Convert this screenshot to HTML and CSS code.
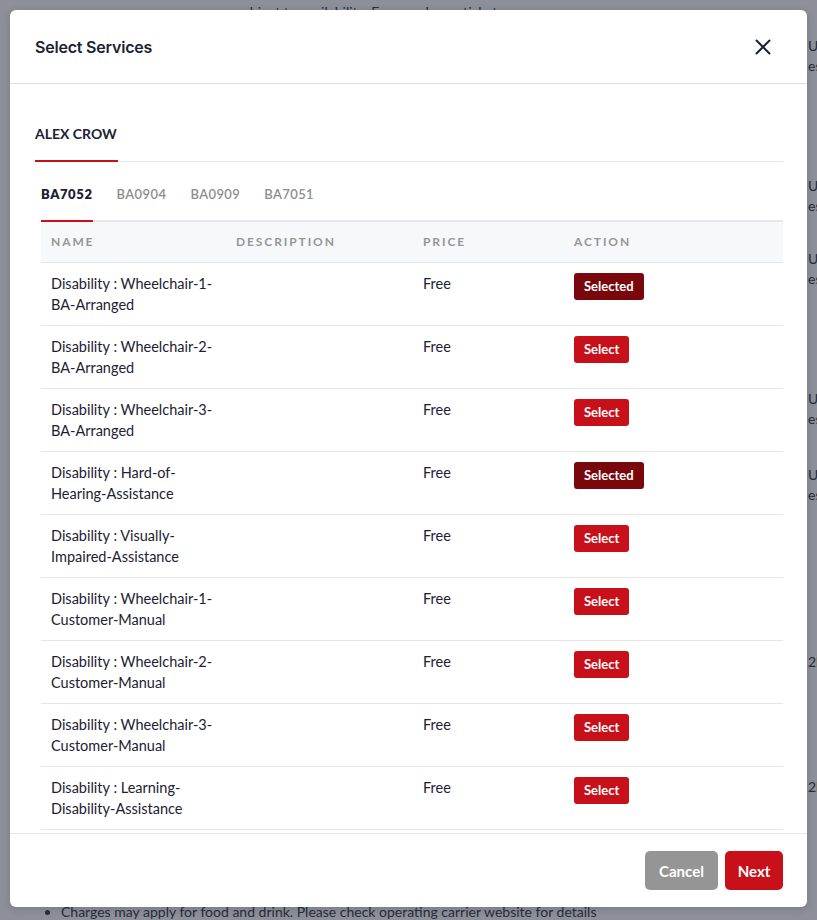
FILE: index.html
```html
<!DOCTYPE html>
<html lang="en">
<head>
<meta charset="utf-8">
<title>Select Services</title>
<link rel="stylesheet" href="styles.css">
</head>
<body>
<div class="page">
  <p class="bg-top">subject to availability. Fees apply per ticket</p>
  <div class="bg-right">
    <div class="bg-item i1"><span>UK</span><span>est</span></div>
    <div class="bg-item i2"><span>UK</span><span>est</span></div>
    <div class="bg-item i3"><span>UK</span><span>est</span></div>
    <div class="bg-item i4"><span>UK</span><span>est</span></div>
    <div class="bg-item i5"><span>UK</span><span>est</span></div>
    <div class="bg-item i6"><span>2h</span></div>
    <div class="bg-item i7"><span>2h</span></div>
  </div>
  <ul class="bg-bottom"><li>Charges may apply for food and drink. Please check operating carrier website for details</li></ul>
</div>
<div class="overlay"></div>
<div class="modal">
  <div class="modal-header">
    <h2 class="modal-title">Select Services</h2>
    <button class="close" aria-label="Close">
      <svg width="16" height="16" viewBox="0 0 16 16"><path d="M1.5 1.5 L14.5 14.5 M14.5 1.5 L1.5 14.5" stroke="#1b2233" stroke-width="2" stroke-linecap="round" fill="none"/></svg>
    </button>
  </div>
  <div class="modal-body">
    <div class="pax-tabs"><span class="pax-tab active">ALEX CROW</span></div>
    <div class="flights">
      <div class="flight-tabs">
        <span class="flight-tab active">BA7052</span>
        <span class="flight-tab">BA0904</span>
        <span class="flight-tab">BA0909</span>
        <span class="flight-tab">BA7051</span>
      </div>
      <table class="services">
        <thead>
          <tr><th class="c-name">Name</th><th class="c-desc">Description</th><th class="c-price">Price</th><th class="c-act">Action</th></tr>
        </thead>
        <tbody>
          <tr><td>Disability : Wheelchair-1-BA-Arranged</td><td></td><td>Free</td><td><button class="btn-sel selected">Selected</button></td></tr>
          <tr><td>Disability : Wheelchair-2-BA-Arranged</td><td></td><td>Free</td><td><button class="btn-sel">Select</button></td></tr>
          <tr><td>Disability : Wheelchair-3-BA-Arranged</td><td></td><td>Free</td><td><button class="btn-sel">Select</button></td></tr>
          <tr><td>Disability : Hard-of-Hearing-Assistance</td><td></td><td>Free</td><td><button class="btn-sel selected">Selected</button></td></tr>
          <tr><td>Disability : Visually-Impaired-Assistance</td><td></td><td>Free</td><td><button class="btn-sel">Select</button></td></tr>
          <tr><td>Disability : Wheelchair-1-Customer-Manual</td><td></td><td>Free</td><td><button class="btn-sel">Select</button></td></tr>
          <tr><td>Disability : Wheelchair-2-Customer-Manual</td><td></td><td>Free</td><td><button class="btn-sel">Select</button></td></tr>
          <tr><td>Disability : Wheelchair-3-Customer-Manual</td><td></td><td>Free</td><td><button class="btn-sel">Select</button></td></tr>
          <tr><td>Disability : Learning-Disability-Assistance</td><td></td><td>Free</td><td><button class="btn-sel">Select</button></td></tr>
        </tbody>
      </table>
    </div>
  </div>
  <div class="modal-footer">
    <button class="btn btn-cancel">Cancel</button>
    <button class="btn btn-next">Next</button>
  </div>
</div>
</body>
</html>
```
FILE: styles.css
```css
* { box-sizing: border-box; }
html, body { margin: 0; padding: 0; }
body {
  width: 817px;
  height: 920px;
  overflow: hidden;
  background: #ffffff;
  font-family: "Lato", "Noto Sans", sans-serif;
  color: #1b2233;
  position: relative;
}
.page {
  position: relative;
  height: 920px;
  display: flex;
  flex-direction: column;
  color: #3a4150;
  font-size: 14px;
}
.bg-top {
  margin: 0;
  padding: 3px 0 0 236px;
  line-height: 18px;
}
.bg-right {
  display: flex;
  flex-direction: column;
  padding-left: 808px;
  white-space: nowrap;
}
.bg-item { display: flex; flex-direction: column; line-height: 20px; }
.i1 { margin-top: 15px; }
.i2 { margin-top: 100px; }
.i3 { margin-top: 33px; }
.i4 { margin-top: 100px; }
.i5 { margin-top: 36px; }
.i6 { margin-top: 147px; }
.i7 { margin-top: 105px; }
.bg-bottom {
  margin: auto 0 0;
  padding: 0 0 0 61px;
  line-height: 17px;
  white-space: nowrap;
}
.overlay {
  position: absolute;
  inset: 0;
  background: rgba(17, 24, 39, 0.48);
}
.modal {
  position: absolute;
  top: 10px;
  left: 10px;
  width: 797px;
  height: 897px;
  background: #ffffff;
  border-radius: 6px;
  display: flex;
  flex-direction: column;
  overflow: hidden;
  box-shadow: 0 2px 8px rgba(0,0,0,0.15);
}
.modal-header {
  height: 74px;
  flex: none;
  display: flex;
  align-items: center;
  justify-content: space-between;
  padding: 0 36px 0 25px;
  border-bottom: 1px solid #dcdfe6;
}
.modal-title {
  margin: 0;
  font-family: "Inter", "Lato", sans-serif;
  font-size: 16px;
  font-weight: 600;
  color: #1b2233;
  letter-spacing: -0.2px;
}
.close {
  border: 0;
  background: none;
  padding: 0;
  width: 16px;
  height: 16px;
  display: flex;
}
.modal-body {
  flex: 1;
  overflow-y: auto;
  scrollbar-width: none;
  padding: 25px 24px 25px 25px;
}
.pax-tabs {
  display: flex;
  border-bottom: 1px solid #e3e6ec;
}
.pax-tab {
  font-size: 14px;
  font-weight: 700;
  line-height: 20px;
  padding: 15px 0 16px;
  width: 83px;
  color: #1b2233;
  border-bottom: 2px solid #c8101a;
  margin-bottom: -1px;
}
.flights {
  margin: 14px 0 0 6px;
}
.flight-tabs {
  display: flex;
  gap: 24px;
  border-bottom: 2px solid #e6e8ee;
}
.flight-tab {
  font-size: 13px;
  font-weight: 600;
  letter-spacing: 0.4px;
  line-height: 20px;
  padding: 8px 0 16px;
  color: #8d8d8d;
  margin-bottom: -2px;
  border-bottom: 2px solid transparent;
}
.flight-tab.active {
  color: #1b2233;
  font-weight: 800;
  letter-spacing: 0.6px;
  border-bottom-color: #c8101a;
}
.services {
  width: 100%;
  border-collapse: collapse;
  table-layout: fixed;
  font-size: 14.5px;
}
.services th {
  background: #f7f8fc;
  height: 40px;
  text-align: left;
  font-size: 12px;
  font-weight: 700;
  letter-spacing: 1.9px;
  text-transform: uppercase;
  color: #969696;
  padding: 0 10px;
  border-bottom: 1px solid #e4e6ea;
}
.c-name { width: 185px; }
.c-desc { width: 187px; }
.c-price { width: 151px; }
.services td {
  vertical-align: top;
  height: 63px;
  padding: 10px 10px 0;
  line-height: 21px;
  color: #1b2233;
  border-bottom: 1px solid #e4e6ea;
}
.btn-sel {
  border: 0;
  border-radius: 3px;
  background: #c8101a;
  color: #ffffff;
  font-family: "Lato", sans-serif;
  font-size: 13px;
  font-weight: 700;
  height: 27px;
  padding: 0 10px;
  cursor: pointer;
}
.btn-sel.selected { background: #7a070c; }
.modal-footer {
  flex: none;
  display: flex;
  justify-content: flex-end;
  gap: 7px;
  padding: 17px 24px;
  border-top: 1px solid #e4e6ea;
}
.btn {
  border: 0;
  border-radius: 5px;
  height: 39px;
  color: #ffffff;
  font-family: "Lato", sans-serif;
  font-size: 15px;
  font-weight: 700;
  cursor: pointer;
}
.btn-cancel { background: #959595; width: 73px; }
.btn-next { background: #c8101a; width: 58px; }
```
